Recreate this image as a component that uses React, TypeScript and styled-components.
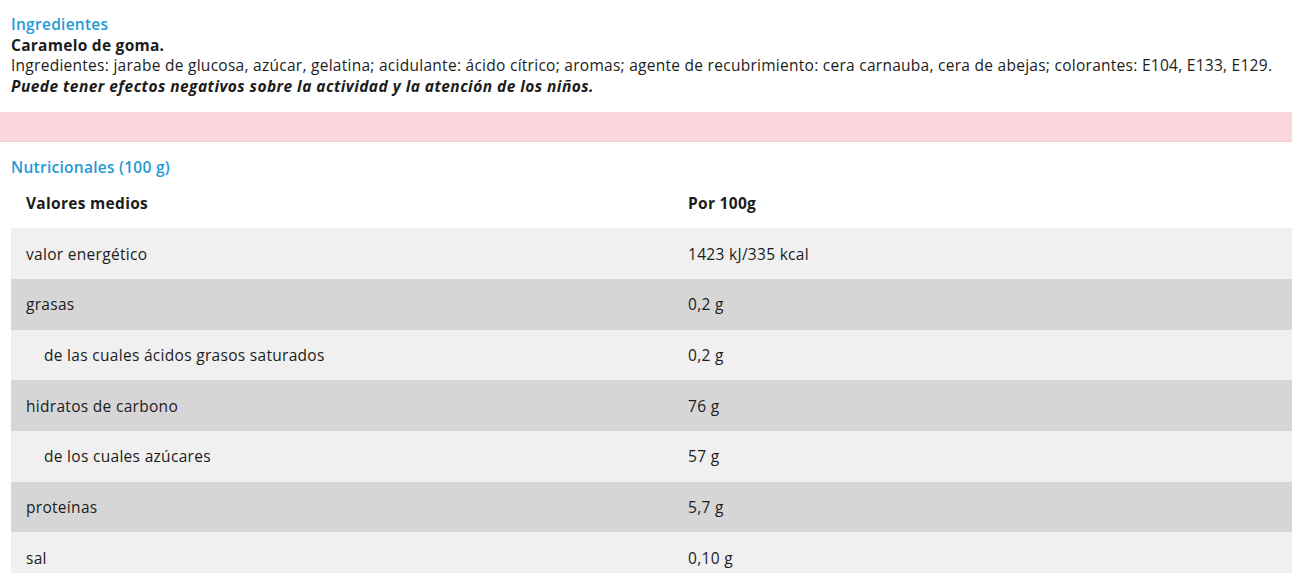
import styled, { createGlobalStyle } from "styled-components";

const Global = createGlobalStyle`
  html, body {
    margin: 0;
    padding: 0;
    background: #ffffff;
  }
  body {
    font-family: 'Open Sans', 'Noto Sans', sans-serif;
    color: #1c1c1c;
    overflow: hidden;
  }
`;

const Page = styled.div`
  width: 1292px;
  padding-top: 14px;
`;

const Block = styled.section`
  padding: 0 11px;
  font-size: 15.5px;
  letter-spacing: 0.27px;
  line-height: 20.5px;
`;

const Title = styled.h3`
  margin: 0;
  font-size: 15.5px;
  font-weight: 600;
  color: #1f9ad6;
  line-height: 20.5px;
`;

const Line = styled.p<{ $bold?: boolean; $italic?: boolean }>`
  margin: 0;
  font-weight: ${(p) => (p.$bold ? 700 : 400)};
  font-style: ${(p) => (p.$italic ? "italic" : "normal")};
  letter-spacing: ${(p) => (p.$italic ? "0.45px" : "inherit")};
  white-space: nowrap;
`;

const Band = styled.div`
  height: 29px;
  margin: 16px 0 15px;
  background: #fbd6dd;
  border-bottom: 1px solid #f4cdd4;
`;

const Table = styled.div`
  margin-left: 11px;
  display: grid;
  grid-template-columns: 662px 1fr;
  font-size: 15.5px;
  letter-spacing: 0.3px;
`;

const Row = styled.div<{ $tone: "none" | "light" | "dark" }>`
  display: contents;
  & > div {
    background: ${(p) =>
      p.$tone === "light" ? "#f0f0f0" : p.$tone === "dark" ? "#d6d6d6" : "transparent"};
  }
`;

const Cell = styled.div<{ $head?: boolean; $indent?: boolean }>`
  height: 50.7px;
  display: flex;
  align-items: center;
  padding-left: ${(p) => (p.$indent ? 33 : 15)}px;
  font-weight: ${(p) => (p.$head ? 700 : 400)};
  white-space: nowrap;
`;

const rows: { name: string; value: string; indent?: boolean }[] = [
  { name: "valor energético", value: "1423 kJ/335 kcal" },
  { name: "grasas", value: "0,2 g" },
  { name: "de las cuales ácidos grasos saturados", value: "0,2 g", indent: true },
  { name: "hidratos de carbono", value: "76 g" },
  { name: "de los cuales azúcares", value: "57 g", indent: true },
  { name: "proteínas", value: "5,7 g" },
  { name: "sal", value: "0,10 g" },
];

export default function App() {
  return (
    <Page>
      <Global />
      <Block>
        <Title>Ingredientes</Title>
        <Line $bold>Caramelo de goma.</Line>
        <Line>
          Ingredientes: jarabe de glucosa, azúcar, gelatina; acidulante: ácido cítrico; aromas; agente de
          recubrimiento: cera carnauba, cera de abejas; colorantes: E104, E133, E129.
        </Line>
        <Line $bold $italic>
          Puede tener efectos negativos sobre la actividad y la atención de los niños.
        </Line>
      </Block>
      <Band />
      <Block>
        <Title>Nutricionales (100 g)</Title>
      </Block>
      <Table>
        <Row $tone="none">
          <Cell $head>Valores medios</Cell>
          <Cell $head>Por 100g</Cell>
        </Row>
        {rows.map((r, i) => (
          <Row key={r.name} $tone={i % 2 === 0 ? "light" : "dark"}>
            <Cell $indent={r.indent}>{r.name}</Cell>
            <Cell>{r.value}</Cell>
          </Row>
        ))}
      </Table>
    </Page>
  );
}
